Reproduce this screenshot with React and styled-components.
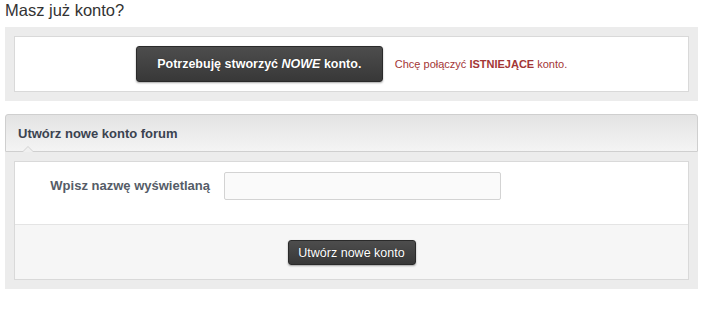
import React from 'react';
import styled, { createGlobalStyle } from 'styled-components';

const GlobalStyle = createGlobalStyle`
body {
  margin: 0;
  background: #fff;
  font-family: "Liberation Sans", Arial, sans-serif;
}
`;

const Page = styled.div`
width: 693px;
margin-left: 5px;
`;

const Title = styled.h2`
margin: 0;
padding-bottom: 7px;
font-size: 16.5px;
line-height: 20px;
font-weight: normal;
color: #333;
`;

const GrayBlock = styled.div`
background: #ececec;
padding: 9px;
`;

const WhiteBox = styled.div`
background: #fff;
border: 1px solid #d9d9d9;
`;

const ChoiceRow = styled.div`
height: 54px;
display: flex;
align-items: center;
justify-content: center;
gap: 12px;
`;

const DarkButton = styled.button`
font-family: "Liberation Sans", Arial, sans-serif;
color: #fff;
background: linear-gradient(to bottom, #4d4d4d, #383838);
border: 1px solid #2a2a2a;
border-radius: 3px;
box-shadow: 0 1px 2px rgba(0, 0, 0, 0.35);
text-shadow: 0 0 1px rgba(0, 0, 0, 0.5);
cursor: pointer;
padding: 0;
width: ${p => p.$w}px;
height: ${p => p.$h}px;
font-size: ${p => p.$size}px;
font-weight: ${p => (p.$bold ? 'bold' : 'normal')};
em {
  font-style: italic;
}
`;

const ExistingLink = styled.span`
font-size: 11px;
color: #a33636;
b {
  font-weight: bold;
}
`;

const Section = styled.div`
margin-top: 13px;
`;

const Header = styled.div`
position: relative;
height: 36px;
border: 1px solid #cfcfcf;
border-radius: 3px 3px 0 0;
background: linear-gradient(to bottom, #e3e3e3, #f4f4f4);
display: flex;
align-items: center;
padding-left: 12px;
font-size: 13px;
font-weight: bold;
color: #3b4350;
&::before {
  content: '';
  position: absolute;
  left: 16px;
  bottom: -1px;
  border-left: 6px solid transparent;
  border-right: 6px solid transparent;
  border-bottom: 6px solid #d2d2d2;
}
&::after {
  content: '';
  position: absolute;
  left: 17px;
  bottom: -1px;
  border-left: 5px solid transparent;
  border-right: 5px solid transparent;
  border-bottom: 5px solid #f0f0f0;
}
`;

const SectionBody = styled.div`
background: #ececec;
padding: 9px;
`;

const FormRow = styled.div`
height: 62px;
display: flex;
align-items: flex-start;
padding-top: 10px;
box-sizing: border-box;
`;

const Label = styled.label`
width: 195px;
padding-right: 14px;
text-align: right;
line-height: 28px;
font-size: 13px;
font-weight: bold;
color: #555c67;
`;

const TextInput = styled.input`
box-sizing: border-box;
width: 277px;
height: 28px;
border: 1px solid #d3d3d3;
border-radius: 2px;
background: #fafafa;
outline: none;
`;

const Footer = styled.div`
border-top: 1px solid #e4e4e4;
background: #f6f6f6;
height: 55px;
display: flex;
justify-content: center;
padding-top: 15px;
box-sizing: border-box;
`;

const App = () => {
  return (
    <Page>
      <GlobalStyle />
      <Title>Masz już konto?</Title>
      <GrayBlock>
        <WhiteBox>
          <ChoiceRow>
            <DarkButton $w={247} $h={36} $size={12.5} $bold>
              Potrzebuję stworzyć <em>NOWE</em> konto.
            </DarkButton>
            <ExistingLink>
              Chcę połączyć <b>ISTNIEJĄCE</b> konto.
            </ExistingLink>
          </ChoiceRow>
        </WhiteBox>
      </GrayBlock>
      <Section>
        <Header>Utwórz nowe konto forum</Header>
        <SectionBody>
          <WhiteBox>
            <FormRow>
              <Label>Wpisz nazwę wyświetlaną</Label>
              <TextInput type="text" />
            </FormRow>
            <Footer>
              <DarkButton $w={128} $h={25} $size={12.5}>Utwórz nowe konto</DarkButton>
            </Footer>
          </WhiteBox>
        </SectionBody>
      </Section>
    </Page>
  );
};

export default App;
